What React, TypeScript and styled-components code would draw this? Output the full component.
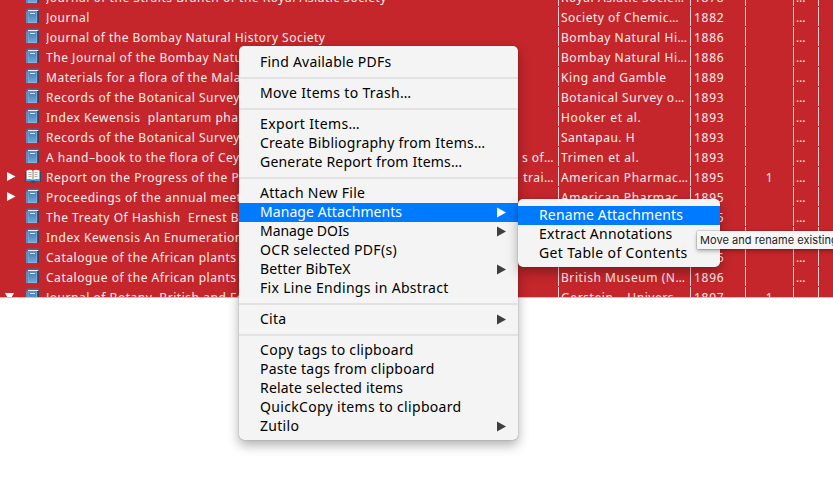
import React from "react";
import styled, { createGlobalStyle } from "styled-components";

const GlobalStyle = createGlobalStyle`
  * { box-sizing: border-box; }
  body {
    margin: 0;
    overflow: hidden;
    background: #fff;
    font-family: "Noto Sans", "Open Sans", sans-serif;
  }
`;

const Page = styled.main`
  position: relative;
  width: 833px;
  height: 497px;
  overflow: hidden;
  background: #fff;
`;

const ItemTree = styled.section`
  display: flex;
  flex-direction: column;
  justify-content: flex-end;
  height: 298px;
  overflow: hidden;
  background: #c4262b;
  border-bottom: 1px solid #c9c4c2;
`;

const Rows = styled.div`
  flex: none;
  height: 310px;
  overflow: hidden;
`;

const Row = styled.div`
  display: grid;
  grid-template-columns: 559px 132px 55px 48px 25px 1fr;
  height: 20px;
  color: #fdeeee;
  font-size: 12px;
  line-height: 21px;
`;

const Cell = styled.div<{ $center?: boolean; $pad?: number; $spacing?: number }>`
  height: 19px;
  padding-left: ${(p) => p.$pad ?? 3}px;
  border-right: 1px solid #f0cfd0;
  text-align: ${(p) => (p.$center ? "center" : "left")};
  letter-spacing: ${(p) => p.$spacing ?? 0.75}px;
  white-space: pre;
  overflow: hidden;
`;

const TitleCell = styled.div`
  display: grid;
  grid-template-columns: 26px 20px 1fr auto;
  height: 19px;
  padding-right: 4px;
  border-right: 1px solid #f0cfd0;
`;

const Title = styled.span<{ $spacing: number }>`
  overflow: hidden;
  white-space: pre;
  letter-spacing: ${(p) => p.$spacing}px;
`;

const Twisty = styled.svg`
  display: block;
  width: 20px;
  height: 20px;
  fill: #fff;
`;

const ItemIcon = styled.svg`
  display: block;
  width: 16px;
  height: 16px;
  margin: 1px 0 0 -1px;
`;

const Popup = styled.div<{ $x: number; $y: number; $w: number; $bottom: number }>`
  position: absolute;
  left: ${(p) => p.$x}px;
  top: ${(p) => p.$y}px;
  width: ${(p) => p.$w}px;
  padding: 7px 0 ${(p) => p.$bottom}px;
  background: #f4f4f4;
  border-radius: 5px;
  box-shadow: 0 0 1px rgba(0, 0, 0, 0.55), 0 5px 12px rgba(0, 0, 0, 0.32);
`;

const MenuItem = styled.div<{ $active?: boolean; $spacing: number }>`
  display: flex;
  align-items: center;
  justify-content: space-between;
  height: 19px;
  padding: 0 12px 0 21px;
  background: ${(p) => (p.$active ? "#007aff" : "transparent")};
  color: ${(p) => (p.$active ? "#fff" : "#000")};
  font-size: 14px;
  line-height: 19px;
  letter-spacing: ${(p) => p.$spacing}px;
  white-space: pre;
`;

const MenuLabel = styled.span`
  padding-bottom: 2px;
  line-height: 17px;
`;

const SubmenuArrow = styled.svg<{ $active?: boolean }>`
  width: 9px;
  height: 11px;
  margin-bottom: 1px;
  fill: ${(p) => (p.$active ? "#fff" : "#3f3f3f")};
`;

const Separator = styled.div`
  height: 12px;
  padding: 5px 0;
  background: #e2e2e2;
  background-clip: content-box;
`;

const Tooltip = styled.div`
  position: absolute;
  left: 697px;
  top: 231px;
  width: 160px;
  height: 18px;
  padding-left: 3px;
  background: #f6f6f6;
  box-shadow: 0 0 1px rgba(0, 0, 0, 0.7), 0 2px 4px rgba(0, 0, 0, 0.3);
  color: #1c1c1c;
  font: 11px/18px Inter, sans-serif;
  letter-spacing: 0.05px;
  white-space: nowrap;
`;

type Kind = "book" | "open";
interface Item {
  title: string;
  tail?: string;
  creator: string;
  year: string;
  count?: string;
  kind?: Kind;
  twisty?: "closed" | "expanded";
  titleSpacing?: number;
  creatorSpacing?: number;
}

const items: Item[] = [
  { title: "Journal of the Straits Branch of the Royal Asiatic Society", creator: "Royal Asiatic Socie…", year: "1878" },
  { title: "Journal", creator: "Society of Chemic…", year: "1882", creatorSpacing: 0.5 },
  { title: "Journal of the Bombay Natural History Society", creator: "Bombay Natural Hi…", year: "1886", titleSpacing: 0.48 },
  { title: "The Journal of the Bombay Natural", creator: "Bombay Natural Hi…", year: "1886" },
  { title: "Materials for a flora of the Malay", creator: "King and Gamble", year: "1889" },
  { title: "Records of the Botanical Survey of", creator: "Botanical Survey o…", year: "1893" },
  { title: "Index Kewensis  plantarum phanero", creator: "Hooker et al.", year: "1893", creatorSpacing: 0.65 },
  { title: "Records of the Botanical Survey of", creator: "Santapau. H", year: "1893", creatorSpacing: 0.5 },
  { title: "A hand–book to the flora of Ceylon", tail: "s of…", creator: "Trimen et al.", year: "1893", creatorSpacing: 0.65 },
  { title: "Report on the Progress of the Pharm", tail: "trai…", creator: "American Pharmac…", year: "1895", count: "1", kind: "open", twisty: "closed", creatorSpacing: 0.67 },
  { title: "Proceedings of the annual meeting", creator: "American Pharmac…", year: "1895", twisty: "closed", creatorSpacing: 0.67 },
  { title: "The Treaty Of Hashish  Ernest Bell", creator: "", year: "1895" },
  { title: "Index Kewensis An Enumeration", creator: "", year: "1895" },
  { title: "Catalogue of the African plants", creator: "", year: "1896" },
  { title: "Catalogue of the African plants", creator: "British Museum (N…", year: "1896" },
  { title: "Journal of Botany, British and Foreign", creator: "Gerstein – Univers…", year: "1897", count: "1", twisty: "expanded" },
];

interface Entry {
  label?: string;
  sub?: boolean;
  active?: boolean;
  spacing?: number;
}

const contextMenu: Entry[] = [
  { label: "Find Available PDFs", spacing: 0.22 },
  {},
  { label: "Move Items to Trash…", spacing: 0.33 },
  {},
  { label: "Export Items…", spacing: 0.36 },
  { label: "Create Bibliography from Items…", spacing: 0.24 },
  { label: "Generate Report from Items…", spacing: 0.2 },
  {},
  { label: "Attach New File", spacing: 0.27 },
  { label: "Manage Attachments", sub: true, active: true, spacing: 0.07 },
  { label: "Manage DOIs", sub: true, spacing: -0.05 },
  { label: "OCR selected PDF(s)", spacing: 0.3 },
  { label: "Better BibTeX", sub: true, spacing: 0.15 },
  { label: "Fix Line Endings in Abstract", spacing: 0.32 },
  {},
  { label: "Cita", sub: true, spacing: 0.25 },
  {},
  { label: "Copy tags to clipboard", spacing: 0.3 },
  { label: "Paste tags from clipboard", spacing: 0.24 },
  { label: "Relate selected items", spacing: 0.2 },
  { label: "QuickCopy items to clipboard", spacing: 0.32 },
  { label: "Zutilo", sub: true, spacing: 0.3 },
];

const attachmentsMenu: Entry[] = [
  { label: "Rename Attachments", active: true, spacing: 0.15 },
  { label: "Extract Annotations", spacing: 0.23 },
  { label: "Get Table of Contents", spacing: 0.35 },
];

function BookIcon({ kind = "book" }: { kind?: Kind }) {
  if (kind === "open") {
    return (
      <ItemIcon viewBox="0 0 16 16">
        <path d="M0 4h16v10h-6l-1 1H7l-1-1H0z" fill="#17557c" />
        <path d="M1 12.500h5.500M9.500 12.500H15" stroke="#3fa3d6" strokeWidth="1.500" />
        <path d="M1.500 2.500Q6 1 8 3q2-2 6.500-.5v9Q10 10.500 8 12.500 6 10.500 1.500 11.500z" fill="#f7f5ee" />
        <path d="M8 3v9" stroke="#8b8984" />
        <path d="M3.500 4.500h3M3.500 6.500h3M3.500 8.500h3M9.500 4.500h3M9.500 6.500h3M9.500 8.500h3" stroke="#b3b1aa" />
      </ItemIcon>
    );
  }
  return (
    <ItemIcon viewBox="0 0 16 16">
      <defs>
        <linearGradient id="cover" x1="0" y1="0" x2="0" y2="1">
          <stop offset="0" stopColor="#4a7cb3" />
          <stop offset="1" stopColor="#68a6d8" />
        </linearGradient>
      </defs>
      <path d="M2 .5h11.800V2L13 15.500H1V2z" fill="#3f6a9f" />
      <path d="M12 3l1.800-1v12.500L12 15.500z" fill="#243f62" />
      <path d="M1.500 3.500h10.700v11.500H1.500z" fill="#86b1d9" />
      <path d="M3.500 4.200h7.800v9.600H3.500z" fill="url(#cover)" />
      <path d="M2.500 3.500v11.500" stroke="#527fb0" strokeWidth=".8" />
      <path d="M3 2.500h10.300" stroke="#e9eff6" />
      <path d="M5 5.500h5" stroke="#dce9f5" />
    </ItemIcon>
  );
}

interface MenuProps {
  entries: Entry[];
  x: number;
  y: number;
  width: number;
  bottom: number;
}

function Menu({ entries, x, y, width, bottom }: MenuProps) {
  return (
    <Popup $x={x} $y={y} $w={width} $bottom={bottom}>
      {entries.map((e, i) =>
        e.label ? (
          <MenuItem key={i} $active={e.active} $spacing={e.spacing ?? 0}>
            <MenuLabel>{e.label}</MenuLabel>
            {e.sub && (
              <SubmenuArrow $active={e.active} viewBox="0 0 9 11">
                <path d="M0 .5l9 5-9 5z" />
              </SubmenuArrow>
            )}
          </MenuItem>
        ) : (
          <Separator key={i} />
        )
      )}
    </Popup>
  );
}

export default function App() {
  return (
    <Page>
      <GlobalStyle />
      <ItemTree>
        <Rows>
          {items.map((it, i) => (
            <Row key={i}>
              <TitleCell>
                <Twisty viewBox="0 0 20 20">
                  {it.twisty === "closed" && <path d="M7 5l8.500 4.500L7 14z" />}
                  {it.twisty === "expanded" && <path d="M5 6h9l-4.500 8z" />}
                </Twisty>
                <BookIcon kind={it.kind} />
                <Title $spacing={it.titleSpacing ?? 0.53}>{it.title}</Title>
                <Title $spacing={0.5}>{it.tail}</Title>
              </TitleCell>
              <Cell $pad={2} $spacing={it.creatorSpacing ?? 0.57}>{it.creator}</Cell>
              <Cell>{it.year}</Cell>
              <Cell $center $pad={0}>{it.count}</Cell>
              <Cell $pad={2}>…</Cell>
              <div />
            </Row>
          ))}
        </Rows>
      </ItemTree>
      <Menu entries={contextMenu} x={239} y={46} width={279} bottom={4} />
      <Menu entries={attachmentsMenu} x={518} y={199} width={202} bottom={4} />
      <Tooltip>Move and rename existing attachments</Tooltip>
    </Page>
  );
}
